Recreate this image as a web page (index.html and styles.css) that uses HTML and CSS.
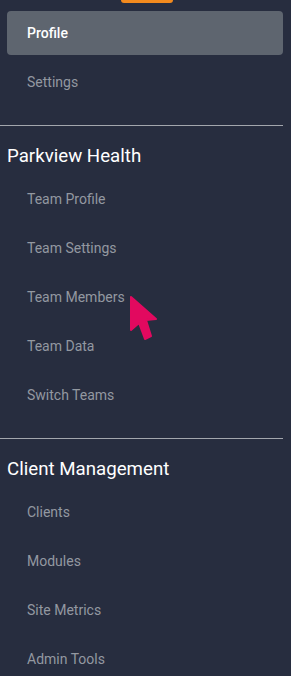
FILE: index.html
```html
<!DOCTYPE html>
<html lang="en">
<head>
    <meta charset="UTF-8">
    <meta name="viewport" content="width=device-width, initial-scale=1.0">
    <title>Menu</title>
    <link rel="stylesheet" href="styles.css">
</head>

<body>
    <nav class="sidebar">
        <div class="tab-marker"></div>

        <ul class="menu">
            <li class="menu-item active">Profile</li>
            <li class="menu-item">Settings</li>
        </ul>

        <hr class="divider">
        <h2 class="section-title">Parkview Health</h2>
        <ul class="menu">
            <li class="menu-item">Team Profile</li>
            <li class="menu-item">Team Settings</li>
            <li class="menu-item">Team Members</li>
            <li class="menu-item">Team Data</li>
            <li class="menu-item">Switch Teams</li>
        </ul>

        <hr class="divider">
        <h2 class="section-title">Client Management</h2>
        <ul class="menu">
            <li class="menu-item">Clients</li>
            <li class="menu-item">Modules</li>
            <li class="menu-item">Site Metrics</li>
            <li class="menu-item">Admin Tools</li>
        </ul>
    </nav>

    <svg class="pointer" width="30" height="50" viewBox="0 0 30 50">
        <path d="M3 2 L3 35 L11 28 L17 44 L23 41 L18 25 L28 24 Z" fill="#e2095f" stroke="#e2095f" stroke-width="2" stroke-linejoin="round"/>
    </svg>
</body>
</html>
```

FILE: styles.css
```css
* {
    margin: 0;
    padding: 0;
    box-sizing: border-box;
}

body {
    font-family: 'Roboto', sans-serif;
    background-color: #272d3f;
    position: relative;
    min-height: 100vh;
    overflow: hidden;
}

.sidebar {
    width: 283px;
}

.tab-marker {
    width: 52px;
    height: 3px;
    margin-left: 121px;
    background-color: #f28a1e;
    border-radius: 0 0 4px 4px;
}

.menu {
    list-style: none;
    display: flex;
    flex-direction: column;
    gap: 5px;
    padding-left: 7px;
}

.tab-marker + .menu {
    margin-top: 8px;
}

.menu-item {
    height: 44px;
    display: flex;
    align-items: center;
    padding-left: 20px;
    font-size: 14px;
    color: #9398a1;
    border-radius: 4px;
}

.menu-item.active {
    background-color: #5e656f;
    color: #ffffff;
    font-weight: 500;
}

.divider {
    border: none;
    height: 1px;
    background-color: #a3a6ad;
    margin-top: 21px;
}

.section-title {
    font-size: 18.7px;
    font-weight: 400;
    line-height: 22px;
    color: #ffffff;
    padding-left: 7px;
    margin: 19px 0 10px;
}

.pointer {
    position: absolute;
    left: 128px;
    top: 295px;
}
```
